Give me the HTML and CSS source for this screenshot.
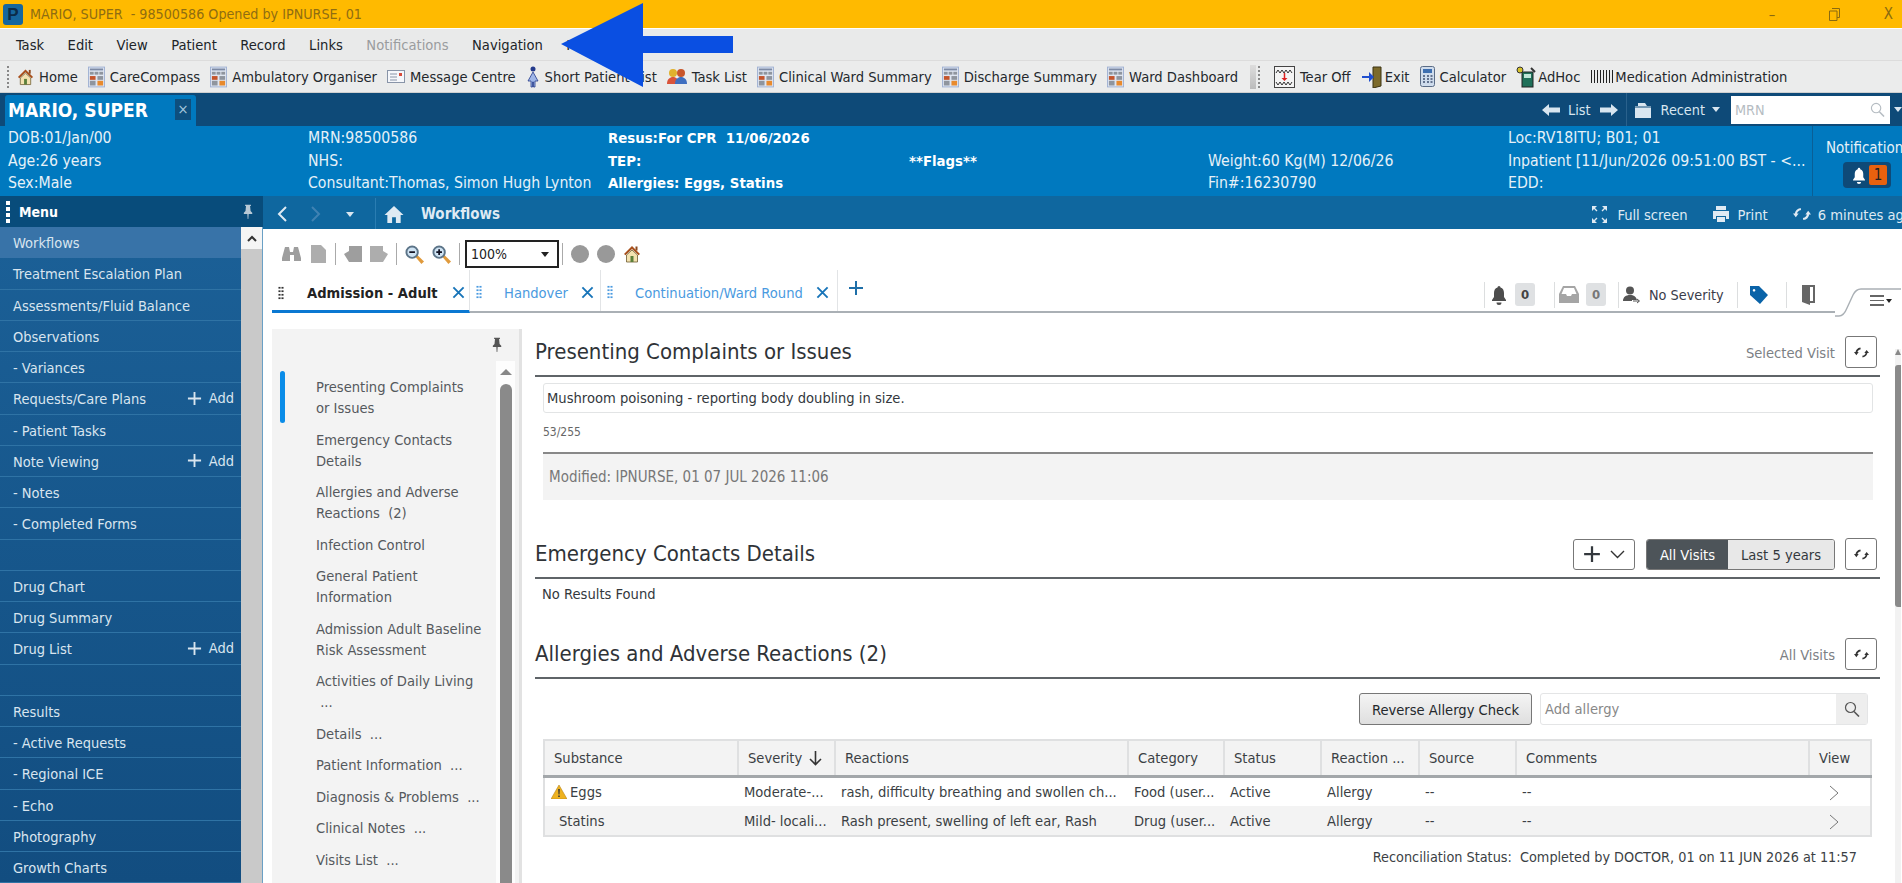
FILE: index.html
```html
<!DOCTYPE html>
<html lang="en">
<head>
<meta charset="utf-8">
<title>MARIO, SUPER</title>
<link rel="stylesheet" href="styles.css">
</head>
<body>
<svg class="defs" width="0" height="0" aria-hidden="true">
  <symbol id="tile" viewBox="0 0 18 22">
    <rect x="0.5" y="0.5" width="17" height="21" fill="#dfe6f2" stroke="#9fb1d2"/>
    <rect x="2" y="2" width="14" height="2" fill="#7d8aa5"/>
    <rect x="2" y="5.500" width="4" height="3" fill="#8f959e"/><rect x="7" y="5.500" width="4" height="3" fill="#8f959e"/><rect x="12" y="5.500" width="4" height="3" fill="#8f959e"/>
    <rect x="2" y="10" width="6" height="4" fill="#c4552c"/><rect x="10" y="10" width="6" height="4" fill="#8f959e"/>
    <rect x="2" y="15" width="6" height="5" fill="#8f959e"/><rect x="10" y="15" width="6" height="5" fill="#e88a2d"/>
  </symbol>
  <symbol id="sync" viewBox="0 0 16 16">
    <path d="M2.500 8C2.800 5.800 4.300 4 7 3.500M13.500 8c-.3 2.200-1.800 4-4.500 4.500" fill="none" stroke="currentColor" stroke-width="1.900"/>
    <path d="M0 7.500h5l-2.500 3.300zM11 8.500h5l-2.500-3.300z" fill="currentColor"/>
  </symbol>
  <symbol id="pin" viewBox="0 0 12 18">
    <path d="M2.500 1h7v1.500h-1l.6 6 2 2v1.500H1v-1.500l2-2 .6-6h-1zM5.200 12h1.600l-.4 6h-.8z" fill="currentColor"/>
  </symbol>
  <symbol id="x" viewBox="0 0 14 14">
    <path d="M1.500 1.500l11 11M12.500 1.500l-11 11" stroke="currentColor" stroke-width="2" fill="none"/>
  </symbol>
  <symbol id="plus" viewBox="0 0 16 16">
    <path d="M8 1v14M1 8h14" stroke="currentColor" stroke-width="2" fill="none"/>
  </symbol>
  <symbol id="house" viewBox="0 0 20 20">
    <path d="M10 1L0 10.500h3V19h5v-6h4v6h5v-8.500h3z" fill="currentColor"/>
  </symbol>
  <symbol id="colourhouse" viewBox="0 0 18 18">
    <path d="M9 1L1 9l1.500 1.200L9 4l6.500 6.200L17 9z" fill="#a8501c"/>
    <path d="M3.500 10L9 5l5.500 5v7h-11z" fill="#f3e2b0" stroke="#6d5a2e" stroke-width="0.800"/>
    <rect x="7.500" y="11" width="3" height="6" fill="#5b7f3a"/>
    <rect x="12.500" y="1.500" width="2" height="4" fill="#8c4a1e"/>
  </symbol>
  <symbol id="bell" viewBox="0 0 16 20">
    <path d="M8 1a1.500 1.500 0 0 1 1.500 1.500C12 3.300 13 5.500 13 8v4l2 3v1H1v-1l2-3V8c0-2.500 1-4.700 3.500-5.500A1.500 1.500 0 0 1 8 1zM5.500 17.500h5a2.500 2.500 0 0 1-5 0z" fill="currentColor"/>
  </symbol>
  <symbol id="mag" viewBox="0 0 20 20">
    <path d="M11 12.500l2-2 7 6.800-2.700 2.700z" fill="#e09a3c"/>
    <circle cx="7.500" cy="7.500" r="6" fill="#cfe3f3" stroke="#5c7488" stroke-width="2"/>
    <path d="M4.500 7.500h6" stroke="#112" stroke-width="1.800"/>
  </symbol>
  <symbol id="magplus" viewBox="0 0 20 20">
    <path d="M11 12.500l2-2 7 6.800-2.700 2.700z" fill="#e09a3c"/>
    <circle cx="7.500" cy="7.500" r="6" fill="#cfe3f3" stroke="#5c7488" stroke-width="2"/>
    <path d="M4.500 7.500h6M7.500 4.500v6" stroke="#112" stroke-width="1.800"/>
  </symbol>
  <symbol id="search" viewBox="0 0 16 16">
    <circle cx="6.500" cy="6.500" r="5" fill="none" stroke="currentColor" stroke-width="1.200"/>
    <path d="M10 10.500l5 5" stroke="currentColor" stroke-width="1.600"/>
  </symbol>
</svg>

<svg class="arrow" width="175" height="84" viewBox="0 0 175 84" aria-hidden="true">
  <path d="M0 41L82 0v33h90v17H82v34z" fill="#0a4fe2"/>
</svg>

<header class="titlebar">
  <span class="applogo">P</span>
  <span class="titletext">MARIO, SUPER&nbsp; - 98500586 Opened by IPNURSE, 01</span>
  <span class="winctl">
    <span class="winmin">&#8211;</span>
    <svg width="11" height="13" viewBox="0 0 11 13"><path d="M3 .5h7.500v9H8M.5 3h7.500v9.500H.5z" fill="none" stroke="#8a6a10"/></svg>
    <span class="winx">X</span>
  </span>
</header>

<nav class="menubar">
  <span>Task</span><span>Edit</span><span>View</span><span>Patient</span><span>Record</span><span>Links</span><span class="muted">Notifications</span><span>Navigation</span><span>Help</span>
</nav>

<div class="toolbar">
  <i class="grip"></i>
  <span class="tool"><svg width="17" height="18"><use href="#colourhouse"/></svg>Home</span>
  <span class="tool"><svg width="17" height="22"><use href="#tile"/></svg>CareCompass</span>
  <span class="tool"><svg width="17" height="22"><use href="#tile"/></svg>Ambulatory Organiser</span>
  <span class="tool"><svg width="18" height="13" viewBox="0 0 18 13"><rect x=".5" y=".5" width="17" height="12" fill="#f5f7fb" stroke="#8894a8"/><path d="M3 4h7M3 7h7M3 10h7" stroke="#8894a8"/><rect x="12" y="3" width="3" height="3" fill="#d84a3a"/></svg>Message Centre</span>
  <span class="tool"><svg width="14" height="22" viewBox="0 0 14 22"><circle cx="7" cy="3" r="2.500" fill="#233a8c"/><path d="M7 6L2 15h3v6h1.500v-5h1v5H9v-6h3z" fill="#9fb6e8" stroke="#233a8c" stroke-width=".8"/></svg>Short Patient List</span>
  <span class="tool"><svg width="20" height="17" viewBox="0 0 20 17"><circle cx="6" cy="5" r="4" fill="#e0b12c"/><circle cx="14" cy="5" r="4" fill="#c8562a"/><path d="M0 16c0-5 3-7 6-7s6 2 6 7z" fill="#d9533a"/><path d="M8 16c0-5 3-7 6-7s6 2 6 7z" fill="#3f6fc0"/></svg>Task List</span>
  <span class="tool"><svg width="17" height="22"><use href="#tile"/></svg>Clinical Ward Summary</span>
  <span class="tool"><svg width="17" height="22"><use href="#tile"/></svg>Discharge Summary</span>
  <span class="tool"><svg width="17" height="22"><use href="#tile"/></svg>Ward Dashboard</span>
  <span class="overflow"></span>
  <i class="grip gripb"></i>
  <span class="tool"><svg width="21" height="22" viewBox="0 0 21 22"><rect x=".5" y=".5" width="20" height="21" fill="#f4f4f4" stroke="#444"/><path d="M2 7l2-3 2 3 2-3 2 3 2-3 2 3 2-3 2 3M2 16l2 3 2-3 2 3 2-3 2 3 2-3 2 3 2-3" fill="none" stroke="#333"/><path d="M10.500 7v6" stroke="#d22" stroke-width="1.500"/><path d="M7.500 12h6l-3 3z" fill="#d22"/></svg>Tear Off</span>
  <span class="tool tight"><svg width="22" height="22" viewBox="0 0 22 22"><path d="M12 1h8v19l-8 2z" fill="#7c6a2a" stroke="#3a3212"/><path d="M1 10h7V6l5 5-5 5v-4H1z" fill="#1f4fcf"/></svg>Exit</span>
  <span class="tool"><svg width="15" height="21" viewBox="0 0 15 21"><rect x=".5" y=".5" width="14" height="20" rx="2" fill="#cfdcec" stroke="#5a6c86"/><rect x="3" y="3" width="9" height="4" fill="#3e6fb0"/><path d="M3 10h2M7 10h2M10.500 10h2M3 13h2M7 13h2M10.500 13h2M3 16h2M7 16h2M10.500 16h2" stroke="#405070" stroke-width="1.500"/></svg>Calculator</span>
  <span class="tool tight"><svg width="20" height="22" viewBox="0 0 20 22"><rect x="6" y="6" width="11" height="15" fill="#1f6f58" stroke="#222"/><rect x="8" y="8" width="7" height="4" fill="#bfe5d8"/><circle cx="4" cy="4" r="3" fill="#d6c22c" stroke="#333"/><path d="M15 2l4 4" stroke="#333" stroke-width="2"/></svg>AdHoc</span>
  <span class="tool flush"><span class="barcode"></span>Medication Administration</span>
</div>

<div class="banner">
  <div class="ptab"><span class="ptabname">MARIO, SUPER</span><span class="ptabx">&#215;</span></div>
  <div class="bannerright">
    <svg width="18" height="12" viewBox="0 0 18 12"><path d="M0 6l7-6v3.500h11v5H7V12z" fill="#d9e6f0"/></svg>
    <span class="blist">List</span>
    <svg width="18" height="12" viewBox="0 0 18 12"><path d="M18 6l-7-6v3.500H0v5h11V12z" fill="#d9e6f0"/></svg>
    <i class="bsep"></i>
    <svg width="18" height="18" viewBox="0 0 18 18"><path d="M1 5h3V2h7l2 3h4v12H1z" fill="#d9e6f0"/><path d="M1 6h16" stroke="#0e4a78"/></svg>
    <span class="brecent">Recent</span>
    <i class="caret"></i>
    <span class="mrn"><span>MRN</span><svg width="15" height="15"><use href="#search"/></svg></span>
    <i class="caret"></i>
  </div>
</div>

<section class="demo">
  <div class="dcol dc1"><span>DOB:01/Jan/00</span><span>Age:26 years</span><span>Sex:Male</span></div>
  <div class="dcol dc2"><span>MRN:98500586</span><span>NHS:</span><span>Consultant:Thomas, Simon Hugh Lynton</span></div>
  <div class="dcol dc3 strong"><span>Resus:For CPR&nbsp; 11/06/2026</span><span>TEP:</span><span>Allergies: Eggs, Statins</span></div>
  <div class="dcol dc4 strong"><span>&nbsp;</span><span>**Flags**</span><span>&nbsp;</span></div>
  <div class="dcol dc5"><span>&nbsp;</span><span>Weight:60 Kg(M) 12/06/26</span><span>Fin#:16230790</span></div>
  <div class="dcol dc6"><span>Loc:RV18ITU; B01; 01</span><span>Inpatient [11/Jun/2026 09:51:00 BST - &lt;...</span><span>EDD:</span></div>
  <div class="notif">
    <span>Notifications</span>
    <span class="notifbadge"><svg width="14" height="17"><use href="#bell"/></svg><b>1</b></span>
  </div>
</section>

<div class="workspace">
  <aside class="sidebar">
    <div class="sidehead">
      <i class="dots"></i><b>Menu</b>
      <svg class="sidepin" width="10" height="15"><use href="#pin"/></svg>
    </div>
    <div class="sidebody">
      <ul class="sidelist">
        <li class="on">Workflows</li>
        <li>Treatment Escalation Plan</li>
        <li>Assessments/Fluid Balance</li>
        <li>Observations</li>
        <li>- Variances</li>
        <li>Requests/Care Plans<span class="add"><svg width="15" height="15"><use href="#plus"/></svg>Add</span></li>
        <li>- Patient Tasks</li>
        <li>Note Viewing<span class="add"><svg width="15" height="15"><use href="#plus"/></svg>Add</span></li>
        <li>- Notes</li>
        <li>- Completed Forms</li>
        <li>&nbsp;</li>
        <li>Drug Chart</li>
        <li>Drug Summary</li>
        <li>Drug List<span class="add"><svg width="15" height="15"><use href="#plus"/></svg>Add</span></li>
        <li>&nbsp;</li>
        <li>Results</li>
        <li>- Active Requests</li>
        <li>- Regional ICE</li>
        <li>- Echo</li>
        <li>Photography</li>
        <li>Growth Charts</li>
      </ul>
      <div class="sidescroll"><span class="sideup"><svg width="10" height="7" viewBox="0 0 10 7"><path d="M1 6l4-4 4 4" fill="none" stroke="#333" stroke-width="2"/></svg></span></div>
    </div>
  </aside>

  <main class="content">
    <div class="navbar">
      <svg width="12" height="18" viewBox="0 0 12 18"><path d="M10 2L3 9l7 7" fill="none" stroke="#dfeaf3" stroke-width="2"/></svg>
      <svg class="navnext" width="12" height="18" viewBox="0 0 12 18"><path d="M2 2l7 7-7 7" fill="none" stroke="#3f82b3" stroke-width="2"/></svg>
      <i class="caret navcaret"></i>
      <i class="navsep"></i>
      <svg class="navhome" width="20" height="19"><use href="#house"/></svg>
      <b class="navtitle">Workflows</b>
      <span class="navright">
        <span class="navact"><svg width="17" height="19" viewBox="0 0 17 19"><path d="M1 1h5L1 6zM16 1h-5l5 5zM1 18h5l-5-5zM16 18h-5l5-5z" fill="#dfeaf3"/><path d="M3 3l3 3M14 3l-3 3M3 16l3-3M14 16l-3-3" stroke="#dfeaf3" stroke-width="1.400"/></svg>Full screen</span>
        <span class="navact"><svg width="16" height="18" viewBox="0 0 16 18"><path d="M3 1h10v4H3zM0 6h16v8h-3v-3H3v3H0zM4 12h8v5H4z" fill="#dfeaf3"/></svg>Print</span>
        <span class="navact"><svg width="18" height="18"><use href="#sync"/></svg>6 minutes ago</span>
      </span>
    </div>

    <div class="pagetools">
      <svg width="19" height="16" viewBox="0 0 19 16"><path d="M3 1h4l1 5h3l1-5h4l3 11v3h-7V9H8v6H0v-3z" fill="#9e9e9e"/></svg>
      <svg class="ptdoc" width="15" height="18" viewBox="0 0 15 18"><path d="M0 0h10l5 5v13H0z" fill="#adadad"/></svg>
      <i class="tsep"></i>
      <svg width="18" height="18" viewBox="0 0 18 18"><path d="M5 1h13v16H5L0 9l5-3z" fill="#9e9e9e"/></svg>
      <svg width="18" height="18" viewBox="0 0 18 18"><path d="M13 1H0v16h13l5-8-5-3z" fill="#adadad"/></svg>
      <i class="tsep"></i>
      <svg width="19" height="19"><use href="#mag"/></svg>
      <svg width="19" height="19"><use href="#magplus"/></svg>
      <i class="tsep"></i>
      <span class="zoomsel"><span>100%</span><i class="caret dark"></i></span>
      <i class="tsep"></i>
      <i class="dotgrey"></i>
      <i class="dotgrey"></i>
      <svg width="18" height="18"><use href="#colourhouse"/></svg>
    </div>

    <div class="tabs">
      <div class="tab active"><i class="tgrip"></i><b>Admission - Adult</b><svg width="13" height="13"><use href="#x"/></svg></div>
      <div class="tab t2"><i class="tgrip blue"></i><span>Handover</span><svg width="13" height="13"><use href="#x"/></svg></div>
      <div class="tab t3"><i class="tgrip blue"></i><span>Continuation/Ward Round</span><svg width="13" height="13"><use href="#x"/></svg></div>
      <svg class="tabplus" width="16" height="16"><use href="#plus"/></svg>
      <div class="tabright">
        <span class="trb first"><svg class="gicon" width="16" height="20"><use href="#bell"/></svg><span class="cnt">0</span></span>
        <span class="trb second"><svg width="20" height="17" viewBox="0 0 20 17"><path d="M4 0h12l4 8v9H0V8zM2.500 8H7l1 2h4l1-2h4.500L15 2H5z" fill="#a5a5a5"/></svg><span class="cnt dim">0</span></span>
        <span class="trb third"><svg width="18" height="18" viewBox="0 0 18 18"><circle cx="7" cy="4.500" r="4" fill="#555"/><path d="M0 15c0-4 3-6 7-6s6 1.500 7 5H9v1z" fill="#555"/><path d="M10 15h6M14 13l2.500 2-2.500 2" stroke="#555" fill="none"/></svg><span class="sev">No Severity</span></span>
        <span class="trb fourth"><svg width="20" height="20" viewBox="0 0 20 20"><path d="M1 1h9l9 9-8 9-10-9zM5 4a1.300 1.300 0 1 0 .1 0z" fill="#0a63a8" fill-rule="evenodd"/></svg></span>
        <span class="trb fifth"><svg width="13" height="20" viewBox="0 0 13 20"><path d="M0 0h13v18H8v2L0 17z" fill="#666"/><path d="M8 2h3v14H8z" fill="#fff"/></svg></span>
        <span class="tabfold">
          <svg class="foldcurve" width="66" height="30" viewBox="0 0 66 30"><path d="M0 28h4c4 0 6-3 8-8l6-13c2-4 4-6 8-6h40" fill="none" stroke="#aab0b5" stroke-width="1.400"/></svg>
          <span class="hamb"><i></i><i></i><i></i></span><i class="caret dark small"></i>
        </span>
      </div>
    </div>

    <div class="pagebody">
      <div class="toc">
        <div class="toclist">
          <svg class="tocpin" width="10" height="17"><use href="#pin"/></svg>
          <i class="tocmark"></i>
          <ul>
            <li>Presenting Complaints<br>or Issues</li>
            <li>Emergency Contacts<br>Details</li>
            <li>Allergies and Adverse<br>Reactions&nbsp; (2)</li>
            <li>Infection Control</li>
            <li>General Patient<br>Information</li>
            <li>Admission Adult Baseline<br>Risk Assessment</li>
            <li>Activities of Daily Living<br>&nbsp;...</li>
            <li>Details&nbsp; ...</li>
            <li>Patient Information&nbsp; ...</li>
            <li>Diagnosis &amp; Problems&nbsp; ...</li>
            <li>Clinical Notes&nbsp; ...</li>
            <li>Visits List&nbsp; ...</li>
          </ul>
        </div>
        <div class="tocscroll"><span class="tocup"></span><span class="tocthumb"></span></div>
      </div>

      <div class="main">
        <section>
          <div class="shead">
            <h2>Presenting Complaints or Issues</h2>
            <span class="sright"><span class="scope">Selected Visit</span><button class="sq"><svg width="15" height="15"><use href="#sync"/></svg></button></span>
          </div>
          <div class="subsec">
            <div class="complaint">Mushroom poisoning - reporting body doubling in size.</div>
            <div class="count">53/255</div>
            <div class="modified">Modified: IPNURSE, 01 07 JUL 2026 11:06</div>
          </div>
        </section>

        <section class="emerg">
          <div class="shead">
            <h2>Emergency Contacts Details</h2>
            <span class="sright">
              <button class="addbtn"><svg width="18" height="18"><use href="#plus"/></svg><svg width="15" height="9" viewBox="0 0 15 9"><path d="M1 1l6.500 6.500L14 1" fill="none" stroke="#333" stroke-width="1.400"/></svg></button>
              <span class="seg"><span class="segon">All Visits</span><span class="segoff">Last 5 years</span></span>
              <button class="sq"><svg width="15" height="15"><use href="#sync"/></svg></button>
            </span>
          </div>
          <div class="nores">No Results Found</div>
        </section>

        <section class="allerg">
          <div class="shead">
            <h2>Allergies and Adverse Reactions (2)</h2>
            <span class="sright"><span class="scope">All Visits</span><button class="sq"><svg width="15" height="15"><use href="#sync"/></svg></button></span>
          </div>
          <div class="allergbar">
            <button class="rev">Reverse Allergy Check</button>
            <span class="addall"><span>Add allergy</span><span class="addsearch"><svg width="16" height="16"><use href="#search"/></svg></span></span>
          </div>
          <table class="atable">
            <colgroup><col class="c1"><col class="c2"><col class="c3"><col class="c4"><col class="c5"><col class="c6"><col class="c7"><col class="c8"><col class="c9"></colgroup>
            <thead>
              <tr><th>Substance</th><th class="sort">Severity<svg width="15" height="16" viewBox="0 0 15 16"><path d="M7.500 1v13M2 9l5.500 5.500L13 9" fill="none" stroke="#333" stroke-width="1.600"/></svg></th><th>Reactions</th><th>Category</th><th>Status</th><th>Reaction ...</th><th>Source</th><th>Comments</th><th>View</th></tr>
            </thead>
            <tbody>
              <tr><td class="sub"><svg width="16" height="14" viewBox="0 0 16 14"><path d="M8 0l8 14H0z" fill="#eeb21f" stroke="#b9851a" stroke-width=".6"/><path d="M7.200 4h1.600l-.3 5.500h-1zM7.200 10.500h1.600V12H7.200z" fill="#333"/></svg>Eggs</td><td>Moderate-...</td><td>rash, difficulty breathing and swollen ch...</td><td>Food (user...</td><td>Active</td><td>Allergy</td><td>--</td><td>--</td><td class="chev"><svg width="10" height="16" viewBox="0 0 10 16"><path d="M1 1l8 7-8 7" fill="none" stroke="#777"/></svg></td></tr>
              <tr><td class="sub plain">Statins</td><td>Mild- locali...</td><td>Rash present, swelling of left ear, Rash</td><td>Drug (user...</td><td>Active</td><td>Allergy</td><td>--</td><td>--</td><td class="chev"><svg width="10" height="16" viewBox="0 0 10 16"><path d="M1 1l8 7-8 7" fill="none" stroke="#777"/></svg></td></tr>
            </tbody>
          </table>
          <div class="recon">Reconciliation Status:&nbsp; Completed by DOCTOR, 01 on 11 JUN 2026 at 11:57</div>
        </section>
      </div>

      <div class="vscroll"><span class="vup"></span><span class="vthumb"></span></div>
    </div>
  </main>
</div>
</body>
</html>
```

FILE: styles.css
```css
* { box-sizing: border-box; }
html, body { margin: 0; height: 883px; overflow: hidden; }
body {
  width: 1902px; position: relative;
  font-family: "DejaVu Sans Condensed", "DejaVu Sans", sans-serif;
  font-stretch: condensed;
  font-size: 14.600px; color: #33383d; background: #fff;
}
ul { list-style: none; margin: 0; padding: 0; }
h2 { margin: 0 0 2px; font-weight: 400; font-size: 22px; color: #2f3337; }
button { font: inherit; color: inherit; padding: 0; }
.defs { position: absolute; }
.arrow { position: absolute; left: 561px; top: 3px; z-index: 5; }

.titlebar { height: 28px; background: #ffba00; display: flex; align-items: center; padding-left: 3px; }
.applogo { width: 20px; height: 21px; border-radius: 3px; background: #16679e; color: #0b2c49; font: 700 17px/21px "Liberation Sans", sans-serif; text-align: center; }
.titletext { margin-left: 7px; color: #8f6d12; font-size: 14.200px; }
.winctl { margin-left: auto; display: flex; align-items: center; gap: 44px; padding-right: 9px; color: #8a6a10; }
.winmin { width: 12px; margin-right: 4px; }
.winx { font-size: 15px; }

.menubar { height: 32px; margin-top: 1px; background: #e9eaea; display: flex; align-items: center; gap: 23.500px; padding-left: 16px; color: #202428; border-bottom: 1px solid #dcdcdc; }
.muted { color: #9a9c9e; }

.toolbar { height: 32px; background: #ebecec; display: flex; align-items: center; padding-left: 7px; color: #24282c; border-bottom: 1px solid #cfd0d0; }
.grip { width: 2px; height: 22px; margin-right: 8px; background: repeating-linear-gradient(#888 0 2px, transparent 2px 4px); }
.gripb { margin: 0 14px 0 2px; }
.tool { display: flex; align-items: center; gap: 5px; margin-right: 10px; white-space: nowrap; }
.tool.tight { gap: 2px; }
.tool.flush { gap: 0; margin-right: 0; margin-left: 1px; }
.overflow { width: 6px; height: 24px; margin-left: 2px; background: linear-gradient(#ddd, #bbb); }
.barcode { width: 24px; height: 13px; background: repeating-linear-gradient(90deg, #222 0 1.500px, transparent 1.500px 3px); }

.banner { height: 33px; background: #0e4a78; display: flex; align-items: flex-end; padding-left: 5px; }
.ptab { width: 191px; height: 31px; background: #0079bf; border-radius: 3px 3px 0 0; display: flex; align-items: center; padding: 0 0 2px 3px; color: #fff; }
.ptabname { font-weight: 700; font-size: 19px; }
.ptabx { margin-left: auto; margin-right: 5px; width: 16px; height: 21px; background: #0e4f7e; color: #a8c8de; text-align: center; line-height: 20px; }
.bannerright { margin-left: auto; height: 33px; display: flex; align-items: center; color: #d9e6f0; font-size: 14.300px; }
.blist { margin: 0 9px 0 8px; }
.bsep { width: 1px; height: 33px; background: #2a618c; margin: 0 7px 0 8px; }
.brecent { margin: 0 7px 0 9px; }
.caret { display: block; width: 0; height: 0; flex: none; border: 4px solid transparent; border-top: 5px solid #d9e6f0; border-bottom: 0; }
.caret.dark { border-top-color: #222; }
.caret.small { border-width: 3px; border-top-width: 4px; border-bottom: 0; }
.mrn { width: 159px; height: 28px; margin: 0 4px 0 11px; background: #fff; display: flex; align-items: center; justify-content: space-between; padding: 0 5px 0 4px; color: #b5bcc2; }

.demo { height: 70px; background: #0079bf; color: #e6f1f8; display: flex; font-size: 15.700px; }
.dcol { flex: none; display: flex; flex-direction: column; padding-top: 1px; white-space: nowrap; line-height: 22.500px; }
.strong { font-weight: 700; color: #fff; font-size: 14.800px; }
.dc1 { width: 308px; padding-left: 8px; }
.dc2 { width: 300px; }
.dc3 { width: 301px; }
.dc4 { width: 299px; }
.dc5 { width: 300px; }
.dc6 { width: 304px; }
.notif { flex: none; width: 90px; overflow: hidden; border-left: 1px solid #0a5f96; padding: 13px 0 0 13px; display: flex; flex-direction: column; gap: 5px; white-space: nowrap; font-size: 15px; }
.notifbadge { width: 48px; height: 26px; margin-left: 17px; border-radius: 4px; background: #0e4a78; display: flex; align-items: center; justify-content: flex-end; gap: 3px; padding-right: 4px; color: #fff; }
.notifbadge b { width: 18px; height: 20px; border-radius: 2px; background: #e8610e; color: #222; text-align: center; line-height: 20px; font-weight: 400; }

.workspace { display: flex; height: 687px; }
.sidebar { width: 263px; flex: none; display: flex; flex-direction: column; }
.sidehead { height: 31px; flex: none; background: #084c7b; color: #fff; display: flex; align-items: center; padding-left: 6px; }
.dots { width: 4px; height: 22px; margin-right: 9px; background: repeating-linear-gradient(#fff 0 4px, transparent 4px 6px); }
.sidehead b { font-size: 14px; }
.sidepin { margin-left: auto; margin-right: 10px; color: #b8c9d6; }
.sidebody { display: flex; flex: 1; overflow: hidden; }
.sidelist { width: 241px; flex: none; background: #1a5f93; background-image: linear-gradient(#1b6097, #124d80); color: #d9e5ef; font-size: 14.500px; }
.sidelist li { height: 31.250px; line-height: 32px; padding: 0 7px 0 13px; display: flex; justify-content: space-between; border-bottom: 1px solid #2f73a5; white-space: nowrap; }
.sidelist li.on { background: #3873a8; border-bottom-color: #3873a8; }
.add { display: flex; align-items: center; gap: 7px; }
.sidescroll { flex: 1; background: #c9c9c9; border-right: 1px solid #6aa0c5; }
.sideup { height: 22px; display: flex; align-items: center; justify-content: center; background: #f5f5f5; }

.content { flex: 1; min-width: 0; display: flex; flex-direction: column; }
.navbar { height: 34px; flex: none; margin-bottom: -1px; background: #0f679f; display: flex; align-items: center; padding: 2px 0 0 13px; color: #dfeaf3; }
.navnext { margin-left: 22px; }
.navcaret { margin-left: 24px; }
.navsep { width: 1px; height: 32px; background: #2a7db2; margin: 0 8px 0 21px; }
.navtitle { margin-left: 17px; font-size: 15px; }
.navright { margin-left: auto; display: flex; align-items: center; gap: 25px; white-space: nowrap; }
.navact { display: flex; align-items: center; gap: 9px; }
.navact:last-child { margin-right: -10px; gap: 7px; }

.pagetools { height: 41px; flex: none; display: flex; align-items: center; gap: 8px; padding: 9px 0 0 19px; background: #fff; }
.ptdoc { margin: 0 1px 0 2px; }
.tsep { width: 1px; height: 22px; background: #aaa; }
.zoomsel { width: 94px; height: 28px; margin: 0 -5px 0 -3px; border: 2px solid #222; display: flex; align-items: center; justify-content: space-between; padding: 0 8px 0 4px; color: #222; font-size: 14px; }
.dotgrey { width: 18px; height: 18px; border-radius: 50%; background: #999; }

.tabs { height: 43px; flex: none; margin-left: 9px; display: flex; align-items: stretch; border-bottom: 2px solid #aab0b5; }
.tab { display: flex; align-items: center; border-right: 1px solid #e2e4e6; color: #4a9ae0; padding: 3px 0 0 6px; }
.tab svg { color: #1673b8; margin-left: 13px; }
.tab.active { width: 198px; border-bottom: 3px solid #0a78d2; margin-bottom: -2px; color: #222; padding: 5px 0 0 6px; }
.tab.active b { margin-left: -2px; margin-right: 1px; }
.tab.t2 { width: 131px; }
.tab.t3 { width: 237px; }
.tgrip { width: 6px; height: 14px; margin-right: 25px; background-image: radial-gradient(circle, #333 1px, transparent 1.200px); background-size: 3px 3.500px; }
.tgrip.blue { margin-right: 22px; background-image: radial-gradient(circle, #4a9ae0 1px, transparent 1.200px); }
.tabplus { color: #1e6fa8; margin: 10px 0 0 10px; }
.tabright { margin-left: auto; display: flex; align-items: center; height: 41px; padding-top: 8px; position: relative; width: 418px; }
.trb { display: flex; align-items: center; height: 26px; border-left: 1px solid #dcdedf; }
.trb.first { width: 70px; padding-left: 6px; gap: 8px; }
.trb.second { width: 64px; padding-left: 4px; gap: 7px; }
.trb.third { width: 119px; padding-left: 4px; gap: 8px; font-size: 14.300px; }
.trb.fourth { width: 49px; padding-left: 11px; }
.trb.fifth { width: 49px; padding-left: 15px; }
.gicon { color: #4d4d4d; }
.cnt { width: 20px; height: 23px; border-radius: 3px; background: #dfe1e3; color: #444; font-weight: 700; text-align: center; line-height: 23px; font-size: 13px; }
.cnt.dim { color: #777; }
.sev { color: #3a3c4a; }
.tabfold { flex: 1; display: flex; align-items: center; padding-left: 33px; gap: 2px; position: relative; height: 41px; margin-bottom: -4px; background: #fff; z-index: 1; }
.foldcurve { position: absolute; left: 0; top: 12px; }
.hamb { display: flex; flex-direction: column; gap: 3px; width: 14px; margin-top: 8px; margin-left: 2px; }
.hamb i { height: 1.500px; background: #666; }
.tabfold .caret { margin-top: 8px; }

.pagebody { flex: 1; display: flex; min-height: 0; padding: 16px 0 0 9px; }
.toc { width: 250px; flex: none; background: #f3f3f3; display: flex; border-right: 3px solid #e2e2e2; }
.toclist { width: 224px; flex: none; position: relative; padding: 47px 0 0 44px; color: #55595d; }
.toclist li { line-height: 21px; margin-bottom: 10.500px; white-space: nowrap; }
.tocpin { position: absolute; right: -6px; top: 7px; color: #555; }
.tocmark { position: absolute; left: 8px; top: 42px; width: 5px; height: 52px; border-radius: 3px; background: #0a8ce8; }
.tocscroll { width: 19px; margin-top: 32px; background: #fdfdfd; display: flex; flex-direction: column; align-items: center; }
.tocup { width: 0; height: 0; margin-top: 8px; border: 6px solid transparent; border-bottom: 6px solid #888; border-top: 0; }
.tocthumb { width: 12px; flex: 1; margin-top: 9px; background: #8a8a8a; border-radius: 6px 6px 0 0; }

.main { width: 1345px; flex: none; margin-left: 13px; }
.shead { height: 48px; border-bottom: 2px solid #5f6468; display: flex; align-items: center; justify-content: space-between; padding-right: 3px; }
.sright { display: flex; align-items: center; }
.scope { color: #7c8084; margin-right: 10px; }
.sq { width: 32px; height: 32px; display: flex; align-items: center; justify-content: center; background: #fff; border: 1px solid #777; border-radius: 3px; color: #333; }
.subsec { padding: 6px 7px 0 8px; }
.complaint { height: 30px; border: 1px solid #e2e4e5; border-radius: 3px; line-height: 28px; padding-left: 3px; color: #33383d; }
.count { height: 16px; margin-top: 11px; font-size: 12px; line-height: 16px; color: #666; }
.modified { height: 48px; margin-top: 12px; border-top: 2px solid #888; background: #f3f3f3; padding-left: 6px; line-height: 46px; color: #777; font-size: 15px; }
.emerg { margin-top: 31px; }
.addbtn { width: 62px; height: 31px; margin-right: 11px; display: flex; align-items: center; justify-content: space-around; padding: 0 4px; background: #fff; border: 1px solid #777; border-radius: 3px; }
.seg { display: flex; height: 31px; margin-right: 10px; border: 1px solid #777; border-radius: 3px; overflow: hidden; }
.segon { width: 81px; background: #4d5459; color: #fff; text-align: center; line-height: 29px; }
.segoff { width: 106px; background: #e8e8e8; text-align: center; line-height: 29px; }
.nores { height: 18px; margin-top: 6px; padding-left: 7px; line-height: 18px; }
.allerg { margin-top: 28px; }
.allergbar { display: flex; justify-content: flex-end; gap: 8px; margin: 14px 12px 0 0; }
.rev { width: 173px; height: 32px; background: linear-gradient(#f4f4f4, #dfdfdf); border: 1px solid #777; border-radius: 3px; color: #24282c; }
.addall { width: 328px; height: 32px; border: 1px solid #e4e5e6; border-radius: 3px; display: flex; justify-content: space-between; align-items: center; padding: 0 0 1px 4px; color: #888; }
.addsearch { width: 31px; height: 30px; background: #eee; display: flex; align-items: center; justify-content: center; color: #555; }
.atable { width: 1327px; margin: 14px 0 0 8px; table-layout: fixed; border-collapse: collapse; }
.c1 { width: 194px; } .c2 { width: 97px; } .c3 { width: 293px; } .c4 { width: 96px; } .c5 { width: 97px; } .c6 { width: 98px; } .c7 { width: 97px; } .c8 { width: 293px; } .c9 { width: 62px; }
.atable th { height: 36px; background: #f3f3f3; font-weight: 400; text-align: left; padding: 0 0 0 9px; border: 2px solid #dfe0e1; border-bottom: 3px solid #a3a7aa; color: #3b3f44; white-space: nowrap; }
.sort svg { vertical-align: -3px; margin-left: 6px; }
.atable td { height: 30px; padding: 0 0 0 6px; white-space: nowrap; overflow: hidden; color: #3b3f44; }
.atable tbody tr:nth-child(2) td { background: #f3f3f3; }
.atable tbody { border-bottom: 2px solid #dfe0e1; border-left: 2px solid #dfe0e1; border-right: 2px solid #dfe0e1; }
.sub svg { vertical-align: -2px; margin-right: 3px; }
.plain { padding-left: 14px !important; }
.chev { padding-left: 20px !important; }
.chev svg { display: block; margin-top: 2px; }
.recon { margin: 10px 23px 0 0; height: 20px; line-height: 20px; text-align: right; color: #3b3f44; font-size: 14.300px; }

.vscroll { width: 6px; margin-left: 15px; margin-top: 20px; background: #f2f2f2; display: flex; flex-direction: column; align-items: center; }
.vup { width: 0; height: 0; border: 3px solid transparent; border-bottom: 6px solid #888; border-top: 0; margin-bottom: 10px; }
.vthumb { width: 6px; height: 242px; background: #8a8a8a; border-radius: 3px 0 0 3px; }
```
